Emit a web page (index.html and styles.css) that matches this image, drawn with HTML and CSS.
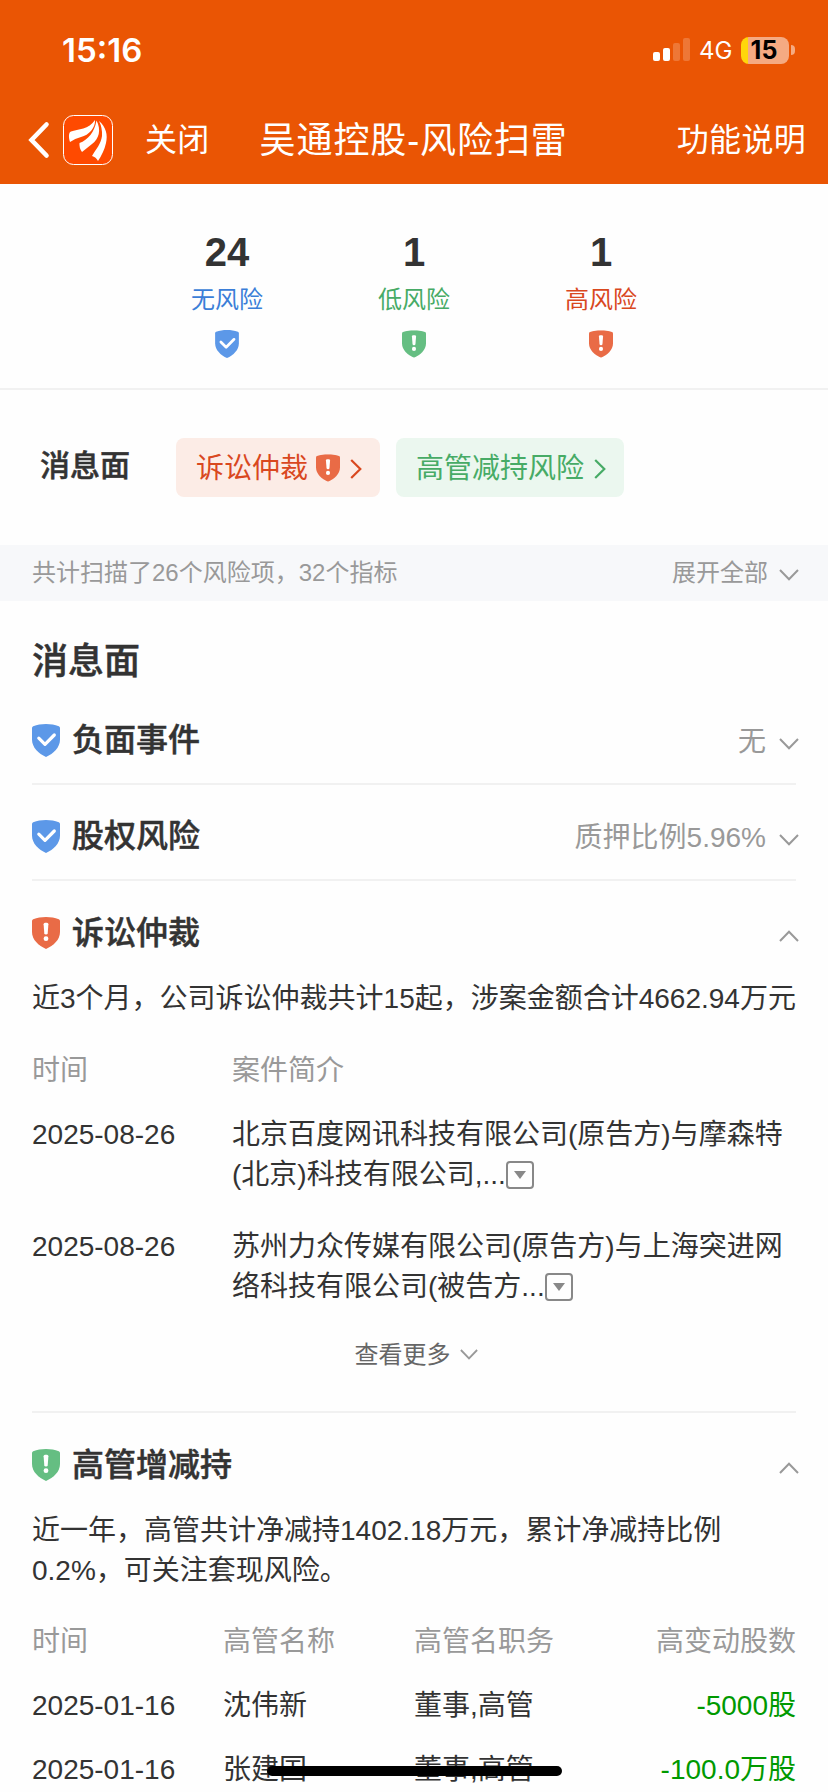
FILE: index.html
```html
<!DOCTYPE html>
<html lang="zh-CN">
<head>
  <meta charset="UTF-8">
  <meta name="viewport" content="width=device-width, initial-scale=1.0">
  <title>吴通控股-风险扫雷</title>
  <link rel="stylesheet" href="styles.css">
</head>
<body>
  <svg class="sprite" width="0" height="0">
    <symbol id="shield" viewBox="0 0 28 33" preserveAspectRatio="none">
      <path d="M14 0C18.500 0 23 .700 26.800 2.200Q28 2.700 28 4V15.500C28 23.500 21.500 29.500 14 33C6.500 29.500 0 23.500 0 15.500V4Q0 2.700 1.200 2.200C5 .700 9.500 0 14 0Z" fill="currentColor"/>
    </symbol>
    <symbol id="ok" viewBox="0 0 28 33">
      <use href="#shield" width="28" height="33"/>
      <path d="M6.800 14.200L13 20.300L22.300 11" fill="none" stroke="#fff" stroke-width="3.200" stroke-linecap="round" stroke-linejoin="round"/>
    </symbol>
    <symbol id="warn" viewBox="0 0 28 32">
      <use href="#shield" width="28" height="32"/>
      <path d="M11.600 7.200Q11.600 5.700 13 5.700H15Q16.400 5.700 16.400 7.200L15.700 16.200Q15.500 17.400 14 17.400T12.300 16.200Z" fill="#fff"/>
      <circle cx="14" cy="21.700" r="2.400" fill="#fff"/>
    </symbol>
    <symbol id="down" viewBox="0 0 20 12">
      <path d="M1 1L10 10.300L19 1" fill="none" stroke="currentColor" stroke-width="2"/>
    </symbol>
    <symbol id="up" viewBox="0 0 20 12">
      <path d="M1 11L10 1.700L19 11" fill="none" stroke="currentColor" stroke-width="2"/>
    </symbol>
    <symbol id="right" viewBox="0 0 12 20">
      <path d="M1.200 1L10.300 10L1.200 19" fill="none" stroke="currentColor" stroke-width="2.200"/>
    </symbol>
  </svg>

  <header class="top">
    <div class="status">
      <span class="time">15:16</span>
      <div class="status-right">
        <svg class="signal" width="38" height="24" viewBox="0 0 38 24" fill="#fff">
          <rect x="0" y="14" width="7" height="9" rx="2"/>
          <rect x="10" y="10" width="7" height="13" rx="2"/>
          <rect x="20" y="5" width="7" height="18" rx="2" opacity=".2"/>
          <rect x="30" y="0" width="7" height="23" rx="2" opacity=".2"/>
        </svg>
        <span class="net">4G</span>
        <span class="battery">15</span>
        <span class="battery-tip"></span>
      </div>
    </div>
    <nav class="nav">
      <svg class="back" width="22" height="38" viewBox="0 0 22 38">
        <path d="M18.500 3.500L3.500 19L18.500 34.500" fill="none" stroke="#fff" stroke-width="4.600" stroke-linecap="round"/>
      </svg>
      <svg class="logo" width="50" height="50" viewBox="0 0 50 50">
        <rect x=".5" y=".5" width="49" height="49" rx="10" fill="#ff4a00" stroke="#fff"/>
        <path d="M7 27C5.500 22 5.500 17.500 8 16.500C15 14 26 14.500 32 5C32.500 13 26 20 18 22Q12 23.500 7 27Z" fill="#fff"/>
        <path d="M19 37Q16 33 16.500 28C25 25 31.500 17 33.500 5.500C38.500 15 36 24 29 29Q24 33 19 37Z" fill="#fff"/>
        <path d="M29 41C33 34 38 29 39 21Q39.500 13 36 6C43 12 45 20 43 28Q41 37 35 46Q33 42 29 41Z" fill="#fff"/>
      </svg>
      <span class="close">关闭</span>
      <h1 class="nav-title">吴通控股-风险扫雷</h1>
      <span class="help">功能说明</span>
    </nav>
  </header>

  <section class="stats">
    <div class="stat blue">
      <b>24</b>
      <span>无风险</span>
      <svg width="24" height="28"><use href="#ok"/></svg>
    </div>
    <div class="stat green">
      <b>1</b>
      <span>低风险</span>
      <svg width="24" height="28"><use href="#warn"/></svg>
    </div>
    <div class="stat red">
      <b>1</b>
      <span>高风险</span>
      <svg width="24" height="28"><use href="#warn"/></svg>
    </div>
  </section>

  <section class="tags">
    <h3>消息面</h3>
    <a class="tag tag-red">诉讼仲裁<svg class="tag-shield" width="24" height="28"><use href="#warn"/></svg><svg class="tag-arrow" width="12" height="20"><use href="#right"/></svg></a>
    <a class="tag tag-green">高管减持风险<svg class="tag-arrow" width="12" height="20"><use href="#right"/></svg></a>
  </section>

  <div class="scan">
    <span>共计扫描了26个风险项，32个指标</span>
    <span class="expand">展开全部<svg class="arrow" width="20" height="12"><use href="#down"/></svg></span>
  </div>

  <main class="content">
    <h2>消息面</h2>

    <div class="row line">
      <svg class="icon blue" width="28" height="33"><use href="#ok"/></svg>
      <h3>负面事件</h3>
      <span class="value">无</span>
      <svg class="arrow" width="20" height="12"><use href="#down"/></svg>
    </div>

    <div class="row line">
      <svg class="icon blue" width="28" height="33"><use href="#ok"/></svg>
      <h3>股权风险</h3>
      <span class="value">质押比例5.96%</span>
      <svg class="arrow" width="20" height="12"><use href="#down"/></svg>
    </div>

    <section class="block line">
      <div class="row">
        <svg class="icon red" width="28" height="32"><use href="#warn"/></svg>
        <h3>诉讼仲裁</h3>
        <svg class="arrow" width="20" height="12"><use href="#up"/></svg>
      </div>
      <p class="summary">近3个月，公司诉讼仲裁共计15起，涉案金额合计4662.94万元</p>
      <div class="cases">
        <span class="th">时间</span>
        <span class="th">案件简介</span>
        <span>2025-08-26</span>
        <span>北京百度网讯科技有限公司(原告方)与摩森特<br>(北京)科技有限公司,...<i class="box"></i></span>
        <span>2025-08-26</span>
        <span>苏州力众传媒有限公司(原告方)与上海突进网<br>络科技有限公司(被告方...<i class="box"></i></span>
      </div>
      <div class="more">查看更多<svg width="18" height="11"><use href="#down"/></svg></div>
    </section>

    <section class="block">
      <div class="row">
        <svg class="icon green" width="28" height="32"><use href="#warn"/></svg>
        <h3>高管增减持</h3>
        <svg class="arrow" width="20" height="12"><use href="#up"/></svg>
      </div>
      <p class="summary">近一年，高管共计净减持1402.18万元，累计净减持比例<br>0.2%，可关注套现风险。</p>
      <div class="holders">
        <span class="th">时间</span>
        <span class="th">高管名称</span>
        <span class="th">高管名职务</span>
        <span class="th num">高变动股数</span>
        <span>2025-01-16</span>
        <span>沈伟新</span>
        <span>董事,高管</span>
        <span class="num down">-5000股</span>
        <span>2025-01-16</span>
        <span>张建国</span>
        <span>董事,高管</span>
        <span class="num down">-100.0万股</span>
      </div>
    </section>
  </main>

  <div class="home-bar"></div>
</body>
</html>
```
FILE: styles.css
```css
* {
  box-sizing: border-box;
}

body {
  margin: 0;
  height: 1792px;
  overflow: hidden;
  background: #fefefe;
  color: #333;
  font-family: "Liberation Sans", "Noto Sans CJK SC", sans-serif;
  font-size: 28px;
  line-height: 40px;
}

h1, h2, h3, p {
  margin: 0;
}

h2, h3 {
  font-weight: 500;
  -webkit-text-stroke: .5px #333;
}

svg {
  display: block;
  flex: none;
}

.sprite {
  position: absolute;
}

.blue { color: #5c98e8; }
.green { color: #65be82; }
.red { color: #e96b46; }

/* header */
.top {
  height: 184px;
  background: #ea5504;
  color: #fff;
}

.status {
  display: flex;
  justify-content: space-between;
  height: 100px;
  padding: 30px 33px 0 62px;
}

.time {
  font-family: Inter, sans-serif;
  font-size: 33px;
  font-weight: 600;
}

.status-right {
  display: flex;
  align-items: center;
  height: 40px;
  font-family: Inter, sans-serif;
}

.net {
  width: 34px;
  margin: 1px 0 0 8px;
  font-size: 24px;
  font-weight: 400;
}

.battery {
  width: 48px;
  height: 27px;
  margin-left: 8px;
  padding-right: 2px;
  border-radius: 8px;
  background: linear-gradient(to right, #ffd60a 7px, #f5aa82 7px);
  color: #000;
  font-size: 25px;
  font-weight: 700;
  line-height: 27px;
  text-align: center;
}

.battery-tip {
  width: 4px;
  height: 10px;
  margin-left: 2px;
  border-radius: 0 5px 5px 0;
  background: #f5aa82;
}

.nav {
  display: flex;
  align-items: center;
  height: 80px;
  padding: 0 22px 0 28px;
  font-size: 32px;
  font-weight: 300;
  letter-spacing: .3px;
}

.logo {
  margin-left: 13px;
}

.close {
  margin-left: 32px;
}

.nav-title {
  margin-left: 50px;
  padding-top: 2px;
  font-size: 36px;
  font-weight: 400;
  letter-spacing: .9px;
}

.close,
.help {
  font-weight: 400;
}

.help {
  margin-left: auto;
}

/* risk counters */
.stats {
  display: flex;
  justify-content: center;
  height: 206px;
  padding-top: 46px;
  border-bottom: 2px solid #f1f1f1;
}

.stat {
  display: flex;
  flex-direction: column;
  align-items: center;
  width: 187px;
  font-size: 24px;
}

.stat b {
  height: 50px;
  color: #333;
  font-size: 40px;
  line-height: 44px;
}

.stat svg {
  margin-top: 10px;
}

.stat.blue span { color: #3b7ed8; }
.stat.green span { color: #47ab66; }
.stat.red span { color: #d9481f; }

/* tags */
.tags {
  display: flex;
  align-items: flex-start;
  height: 155px;
  padding: 48px 40px 0;
}

.tags h3 {
  width: 136px;
  padding-top: 8px;
  font-size: 30px;
}

.tag {
  display: flex;
  align-items: center;
  height: 59px;
  margin-right: 16px;
  padding: 3px 18px 0 20px;
  border-radius: 8px;
}

.tag-red {
  background: #fcece6;
  color: #d9481f;
}

.tag-green {
  background: #ebf7ef;
  color: #47ab66;
}

.tag-shield {
  margin: -3px 0 0 8px;
  color: #e96b46;
}

.tag-arrow {
  margin-left: 10px;
}

/* scan bar */
.scan {
  display: flex;
  align-items: center;
  justify-content: space-between;
  height: 56px;
  padding: 0 29px 0 32px;
  background: #f7f8fa;
  color: #999;
  font-size: 24px;
}

.expand {
  display: flex;
  align-items: center;
  gap: 11px;
}

/* detail list */
.content {
  padding: 0 32px;
}

.content h2 {
  height: 88px;
  padding-top: 41px;
  font-size: 36px;
}

.line {
  border-bottom: 2px solid #f1f1f1;
}

.row {
  display: flex;
  align-items: center;
  height: 96px;
  padding-top: 8px;
}

.row h3 {
  margin-left: 12px;
  font-size: 32px;
}

.value {
  margin-left: auto;
  padding-top: 4px;
  color: #999;
}

.arrow {
  margin: 4px 0 0 auto;
  color: #999;
}

.row .arrow {
  margin: 6px -3px 0 auto;
}

.row .value + .arrow {
  margin: 8px -3px 0 13px;
}

.summary {
  padding-top: 2px;
  white-space: nowrap;
}

.th {
  color: #999;
}

.cases {
  display: grid;
  grid-template-columns: 200px 1fr;
  row-gap: 32px;
  padding-top: 32px;
  white-space: nowrap;
}

.cases .th {
  margin-bottom: -8px;
}

.box {
  display: inline-flex;
  align-items: center;
  justify-content: center;
  width: 28px;
  height: 28px;
  margin-top: 6px;
  border: 2px solid #888;
  border-radius: 4px;
  vertical-align: top;
}

.box::after {
  content: "";
  border: 6px solid transparent;
  border-top: 8px solid #888;
  border-bottom: 0;
}

.more {
  display: flex;
  align-items: center;
  justify-content: center;
  gap: 9px;
  height: 104px;
  padding: 0 0 9px 4px;
  color: #666;
  font-size: 24px;
}

.more svg {
  color: #999;
}

.holders {
  display: grid;
  grid-template-columns: repeat(4, 1fr);
  row-gap: 24px;
  padding-top: 31px;
}

.num {
  text-align: right;
}

.down {
  color: #090;
}

/* home indicator floats over the list */
.home-bar {
  position: absolute;
  left: 267px;
  bottom: 16px;
  width: 295px;
  height: 10px;
  border-radius: 5px;
  background: #000;
}
```
